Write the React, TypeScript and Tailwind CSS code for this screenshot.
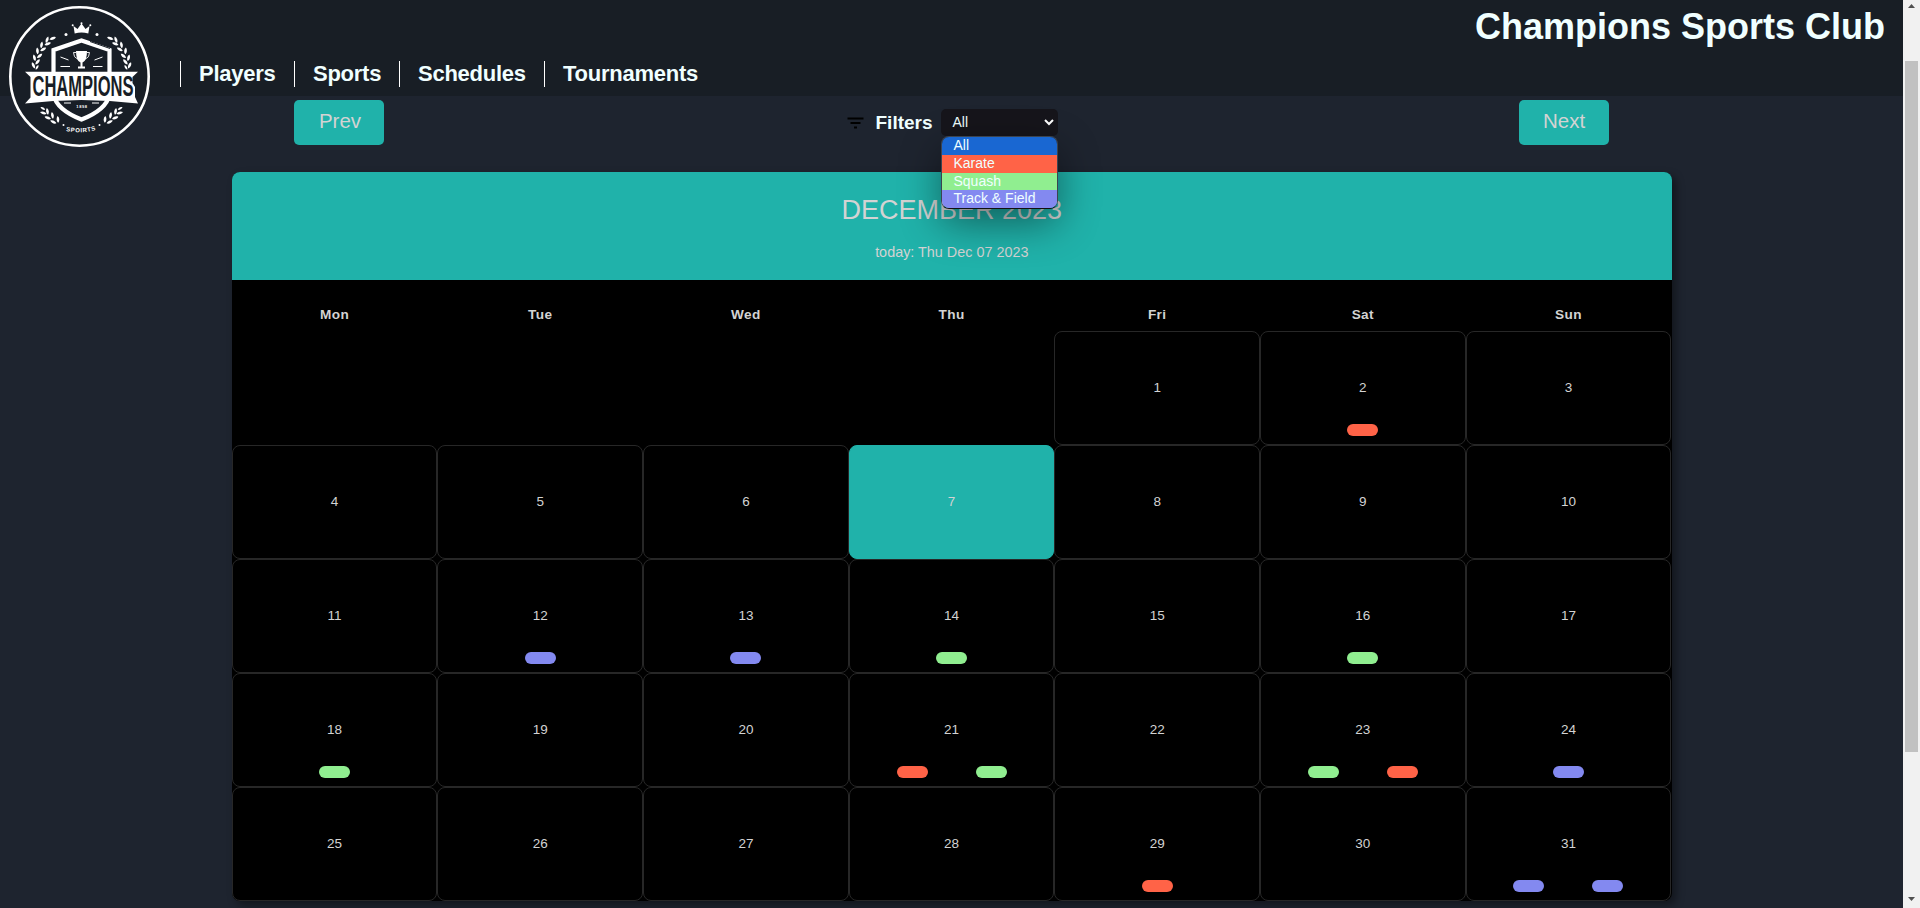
import React from "react";

type Sport = "karate" | "squash" | "track";

const sportColors: Record<Sport, string> = {
  karate: "bg-[#ff6347]",
  squash: "bg-[#90ee90]",
  track: "bg-[#8389f0]",
};

const events: Record<number, Sport[]> = {
  2: ["karate"],
  12: ["track"],
  13: ["track"],
  14: ["squash"],
  16: ["squash"],
  18: ["squash"],
  21: ["karate", "squash"],
  23: ["squash", "karate"],
  24: ["track"],
  29: ["karate"],
  31: ["track", "track"],
};

const weekDays = ["Mon", "Tue", "Wed", "Thu", "Fri", "Sat", "Sun"];
const navItems = [
  { label: "Players", width: "w-[114px]" },
  { label: "Sports", width: "w-[105px]" },
  { label: "Schedules", width: "w-[145px]" },
  { label: "Tournaments", width: "w-[170px]" },
];
const TODAY = 7;
const LEADING_BLANKS = 4;

function Leaf({ x, y, angle, size = 1 }: { x: number; y: number; angle: number; size?: number }) {
  return (
    <path
      d="M0 -3.6 C1.9 -1.6 1.7 1.6 0 3.2 C-1.7 1.6 -1.9 -1.6 0 -3.6Z"
      fill="#fff"
      transform={`translate(${x} ${y}) rotate(${angle}) scale(${size})`}
    />
  );
}

function LaurelHalf() {
  return (
    <g>
      <Leaf x={52.5} y={38.5} angle={70} />
      <Leaf x={47} y={40} angle={20} />
      <Leaf x={47.5} y={44} angle={70} />
      <Leaf x={41.5} y={45} angle={10} />
      <Leaf x={43} y={49.5} angle={60} />
      <Leaf x={37.5} y={51} angle={-5} />
      <Leaf x={39.5} y={56} angle={50} />
      <Leaf x={34.5} y={58} angle={-15} />
      <Leaf x={37.5} y={62} angle={40} />
      <Leaf x={33.5} y={65.5} angle={-25} />
      <Leaf x={37} y={67.5} angle={30} size={0.8} />
      <Leaf x={43} y={108.5} angle={-60} size={0.8} />
      <Leaf x={43.5} y={113} angle={-75} />
      <Leaf x={47.5} y={111.5} angle={-10} />
      <Leaf x={48} y={118} angle={-70} />
      <Leaf x={52.5} y={115.5} angle={-10} />
      <Leaf x={53.5} y={122} angle={-65} />
      <Leaf x={58} y={119.5} angle={-5} />
      <circle cx={63.5} cy={125} r={1} fill="#fff" />
      <circle cx={66} cy={34.5} r={1.5} fill="#fff" />
    </g>
  );
}

function Logo() {
  return (
    <svg className="absolute left-0 top-0" width="160" height="160" viewBox="0 0 160 160">
      <circle cx="79.5" cy="76.5" r="69.2" fill="#181e26" stroke="#fff" strokeWidth="2.6" />
      <LaurelHalf />
      <g transform="translate(163 0) scale(-1 1)">
        <LaurelHalf />
      </g>
      <path d="M73.5 26 L77.5 29 L81.5 23.5 L85.5 29 L89.5 26 L88.3 33.5 Q81.5 31.5 74.7 33.5Z" fill="#fff" />
      <g fill="#fff">
        <circle cx="72.7" cy="25.2" r="1" />
        <circle cx="81.5" cy="23.2" r="1" />
        <circle cx="90.3" cy="25.2" r="1" />
      </g>
      <path d="M81.5 40.5 L109.5 50 V95 Q106 110 81.5 119.5 Q57 110 53.5 95 V50Z" fill="none" stroke="#fff" strokeWidth="4.2" />
      <path d="M90 41.5 L110 48.5" stroke="#181e26" strokeWidth="1" />
      <path d="M76 51 H87 Q87 61 82.5 62.5 V66.5 H85 V68.5 H78 V66.5 H80.5 V62.5 Q76 61 76 51Z" fill="#fff" />
      <path d="M76 52.5 H73.5 Q73.5 57.5 77.5 59 M87 52.5 H89.5 Q89.5 57.5 85.5 59" fill="none" stroke="#fff" strokeWidth="0.9" />
      <path d="M60.5 57 L68.5 60 M60.5 66.5 H70 M102.5 57 L94.5 60 M102.5 66.5 H93" stroke="#fff" strokeWidth="1" />
      <path d="M25 71.8 H138 L132.5 77 V83 L135 87 V97 L138 103.5 Q81.5 96.5 25 103.5 L30.5 97.5 V77Z" fill="#fff" />
      <text
        x="83"
        y="96.3"
        textAnchor="middle"
        textLength="101"
        lengthAdjust="spacingAndGlyphs"
        className="font-['Liberation_Sans'] text-[29px] font-bold"
        fill="#181e26"
      >
        CHAMPIONS
      </text>
      <path d="M64 103 H71 M92 103 H99" stroke="#fff" strokeWidth="1" />
      <text x="82" y="107.5" textAnchor="middle" className="font-['Liberation_Sans'] text-[4px] font-bold" fill="#fff" letterSpacing="0.6">
        1898
      </text>
      <path id="sports-arc" d="M60 129.5 Q81.5 136 103 127.5" fill="none" />
      <text className="font-['Liberation_Sans'] text-[6px] font-bold" fill="#fff" letterSpacing="0.6" textAnchor="middle">
        <textPath href="#sports-arc" startOffset="49%">SPOIRTS</textPath>
      </text>
    </svg>
  );
}

function Header() {
  return (
    <header className="relative flex h-24 justify-between bg-[#181e25] text-[#f0ffff]">
      <Logo />
      <nav className="flex items-start pl-[180px] pt-[61px]">
        {navItems.map((item) => (
          <a
            key={item.label}
            className={`${item.width} h-[26px] whitespace-nowrap border-l border-white pl-[18px] text-[22px] font-bold leading-[26px] tracking-[-0.25px]`}
          >
            {item.label}
          </a>
        ))}
      </nav>
      <h1 className="pr-[18px] pt-[6px] text-[36px] font-bold leading-[41px]">Champions Sports Club</h1>
    </header>
  );
}

function FilterMenu() {
  return (
    <div className="relative">
      <button className="flex h-[27px] w-[117px] items-center justify-between rounded-[5px] bg-[#16151b] pl-3 pr-1 text-[14px] text-[#f0ffff]">
        All
        <svg width="10" height="7" viewBox="0 0 10 7">
          <path d="M1 1 L5 5 L9 1" fill="none" stroke="#fff" strokeWidth="2" />
        </svg>
      </button>
      <ul className="absolute left-0 top-[27px] z-10 w-[117px] overflow-hidden rounded-[8px] border border-[#3b4450] border-b-[#101010] text-[14px] leading-[16px] text-[#f0ffff] shadow-[0_14px_40px_rgba(0,0,0,0.45)]">
        <li className="h-[18px] bg-[#1967d2] pl-3">All</li>
        <li className="h-[18px] bg-[#ff6347] pl-3">Karate</li>
        <li className="h-[17px] bg-[#90ee90] pl-3">Squash</li>
        <li className="h-[18px] bg-[#8389f0] pl-3">Track &amp; Field</li>
      </ul>
    </div>
  );
}

function Toolbar() {
  return (
    <div className="flex h-[76px] items-start justify-between pl-[294px] pr-[294px] pt-1">
      <button className="h-[45px] w-[90px] rounded-[5px] bg-[#20b2aa] pb-0.5 pl-0.5 text-[20.5px] text-[#d3d3d3]">Prev</button>
      <div className="ml-px flex items-start pt-[9px]">
        <svg className="mr-3 mt-2" width="17" height="12" viewBox="0 0 17 12">
          <path d="M0.5 1.5 H16.5 M3.5 6 H13.5 M7 10.5 H10" stroke="#000" strokeWidth="1.8" />
        </svg>
        <span className="mr-2 w-[57px] text-[19px] font-bold leading-[27px] text-[#f0ffff]">Filters</span>
        <FilterMenu />
      </div>
      <button className="h-[45px] w-[90px] rounded-[5px] bg-[#20b2aa] pb-0.5 text-[20.5px] text-[#d3d3d3]">Next</button>
    </div>
  );
}

function DayCell({ day }: { day: number }) {
  const isToday = day === TODAY;
  return (
    <div
      className={`flex h-[114px] flex-col items-center rounded-[8px] border pt-[47px] text-[13.5px] leading-[18px] ${
        isToday ? "border-[#20b2aa] bg-[#20b2aa]" : "border-[#272727]"
      }`}
    >
      <span>{day}</span>
      <div className="mt-[27px] flex w-[158px] justify-around">
        {(events[day] ?? []).map((sport, i) => (
          <span key={i} className={`h-3 w-[31px] rounded-full ${sportColors[sport]}`} />
        ))}
      </div>
    </div>
  );
}

function Calendar() {
  const days = Array.from({ length: 31 }, (_, i) => i + 1);
  return (
    <section className="ml-[231.8px] h-[729px] w-[1440px] rounded-[8px] bg-black text-[#d3d3d3] shadow-[4px_4px_8px_rgba(0,0,0,0.4)]">
      <div className="flex h-[108px] flex-col items-center rounded-t-[8px] bg-[#20b2aa] pt-[21px]">
        <h2 className="text-[27px] leading-[34px]">DECEMBER 2023</h2>
        <p className="mt-4 text-[14.4px] leading-[18px]">today: Thu Dec 07 2023</p>
      </div>
      <div className="grid w-[1439.5px] grid-cols-7">
        {weekDays.map((day) => (
          <div key={day} className="h-[51px] pt-[26px] text-center text-[13.6px] font-bold leading-[18px] tracking-[0.4px]">
            {day}
          </div>
        ))}
        {Array.from({ length: LEADING_BLANKS }, (_, i) => (
          <div key={`blank-${i}`} />
        ))}
        {days.map((day) => (
          <DayCell key={day} day={day} />
        ))}
      </div>
    </section>
  );
}

function ScrollBar() {
  return (
    <aside className="flex h-full w-[17px] flex-col items-center bg-[#f1f1f1]">
      <svg width="17" height="61" viewBox="0 0 17 61">
        <path d="M5 8 L8.5 4 L12 8Z" fill="#505050" />
      </svg>
      <div className="h-[691px] w-[13px] bg-[#c1c1c1]" />
      <svg className="mt-auto" width="17" height="17" viewBox="0 0 17 17">
        <path d="M5 6 L8.5 10 L12 6Z" fill="#505050" />
      </svg>
    </aside>
  );
}

export default function App() {
  return (
    <div className="flex h-[908px] w-[1920px] overflow-hidden bg-[#1e242f] font-['Liberation_Sans',Arial,sans-serif]">
      <main className="h-full w-[1903px]">
        <Header />
        <Toolbar />
        <Calendar />
      </main>
      <ScrollBar />
    </div>
  );
}
